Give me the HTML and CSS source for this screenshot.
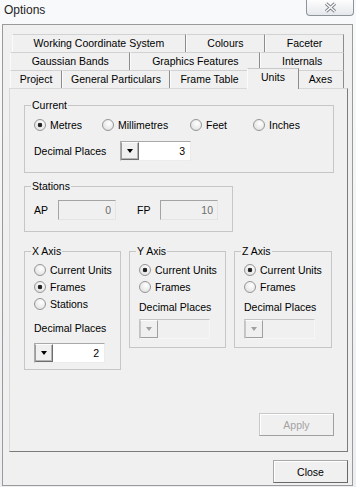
FILE: index.html
```html
<!DOCTYPE html>
<html lang="en">
	<head>
		<meta charset="utf-8" />
		<title>Options</title>
		<link rel="stylesheet" href="styles.css">
	</head>
	<body>
		<div class="dialog">
			<div class="titlebar">
				<span class="title">Options</span>
				<button class="close-x" aria-label="Close">
					<svg width="13" height="11" viewBox="0 0 13 11">
						<path d="M2 1.5 L11 9.5 M11 1.5 L2 9.5" stroke="#80858c" stroke-width="3.4" fill="none"/>
						<path d="M2 1.5 L11 9.5 M11 1.5 L2 9.5" stroke="#fbfbfb" stroke-width="1.4" fill="none"/>
					</svg>
				</button>
			</div>

			<div class="client">
				<div class="tabs">
					<div class="tab-row row1">
						<div class="tab">Working Coordinate System</div>
						<div class="tab">Colours</div>
						<div class="tab">Faceter</div>
					</div>
					<div class="tab-row row2">
						<div class="tab">Gaussian Bands</div>
						<div class="tab">Graphics Features</div>
						<div class="tab">Internals</div>
					</div>
					<div class="tab-row row3">
						<div class="tab t-project">Project</div>
						<div class="tab t-general">General Particulars</div>
						<div class="tab t-frame">Frame Table</div>
						<div class="tab t-units active">Units</div>
						<div class="tab t-axes">Axes</div>
					</div>
				</div>

				<div class="page">
					<fieldset class="grp grp-current">
						<legend>Current</legend>
						<div class="unit-row">
							<label class="opt"><input type="radio" class="radio" name="cur" checked>Metres</label>
							<label class="opt"><input type="radio" class="radio" name="cur">Millimetres</label>
							<label class="opt"><input type="radio" class="radio" name="cur">Feet</label>
							<label class="opt"><input type="radio" class="radio" name="cur">Inches</label>
						</div>
						<div class="dp-row">
							<span class="dp-label">Decimal Places</span>
							<div class="spin">
								<span class="spin-btn"><i class="arrow"></i></span>
								<span class="spin-val">3</span>
							</div>
						</div>
					</fieldset>

					<fieldset class="grp grp-stations">
						<legend>Stations</legend>
						<div class="st-row">
							<span class="st-label">AP</span>
							<input class="field" value="0" disabled>
							<span class="st-label fp">FP</span>
							<input class="field" value="10" disabled>
						</div>
					</fieldset>

					<div class="axes">
						<fieldset class="grp axis axis-x">
							<legend>X Axis</legend>
							<label class="opt row"><input type="radio" class="radio" name="ax">Current Units</label>
							<label class="opt row"><input type="radio" class="radio" name="ax" checked>Frames</label>
							<label class="opt row"><input type="radio" class="radio" name="ax">Stations</label>
							<div class="axis-dp">Decimal Places</div>
							<div class="spin">
								<span class="spin-btn"><i class="arrow"></i></span>
								<span class="spin-val">2</span>
							</div>
						</fieldset>
						<fieldset class="grp axis axis-y">
							<legend>Y Axis</legend>
							<label class="opt row"><input type="radio" class="radio" name="ay" checked>Current Units</label>
							<label class="opt row"><input type="radio" class="radio" name="ay">Frames</label>
							<div class="axis-dp">Decimal Places</div>
							<div class="spin off">
								<span class="spin-btn"><i class="arrow"></i></span>
								<span class="spin-val"></span>
							</div>
						</fieldset>
						<fieldset class="grp axis axis-z">
							<legend>Z Axis</legend>
							<label class="opt row"><input type="radio" class="radio" name="az" checked>Current Units</label>
							<label class="opt row"><input type="radio" class="radio" name="az">Frames</label>
							<div class="axis-dp">Decimal Places</div>
							<div class="spin off">
								<span class="spin-btn"><i class="arrow"></i></span>
								<span class="spin-val"></span>
							</div>
						</fieldset>
					</div>

					<button class="btn btn-apply" disabled>Apply</button>
				</div>

				<div class="dialog-foot">
					<button class="btn">Close</button>
				</div>
			</div>
		</div>
	</body>
</html>
```

FILE: styles.css
```css
* {
	box-sizing: border-box;
}
body {
	margin: 0;
	width: 356px;
	height: 487px;
	overflow: hidden;
	background: linear-gradient(#f8f9fa, #eceef1);
	font-family: "Liberation Sans", Arial, sans-serif;
	font-size: 10.5px;
	color: #000;
}

.dialog {
	height: 487px;
	display: flex;
	flex-direction: column;
}

/* title bar */
.titlebar {
	height: 24px;
	display: flex;
	justify-content: space-between;
	align-items: flex-start;
	padding: 0 2px 0 4px;
}
.title {
	font-size: 12px;
	line-height: 12px;
	margin-top: 4px;
	color: #1e1e1e;
}
.close-x {
	width: 48px;
	height: 16px;
	padding: 0;
	border: 1px solid #8d939b;
	border-top: 0;
	border-radius: 0 0 4px 4px;
	background: linear-gradient(#fdfdfd, #e6e8ec);
	display: flex;
	align-items: center;
	justify-content: center;
}

/* client area */
.client {
	margin-left: 2px;
	width: 351px;
	height: 462px;
	border: 1px solid #9a9a9a;
	background: #f0f0f0;
	padding-top: 9px;
	display: flex;
	flex-direction: column;
}

.tabs {
	margin: 0 4px 0 6px;
}
.tab-row {
	display: flex;
	height: 18px;
}
.row1 {
	margin: 0 4px 0 3px;
}
.row2 {
	margin: 0 4px 0 1px;
}
.row3 {
	margin: 0 3px 0 1px;
}
.tab {
	flex: 1 1 auto;
	padding: 0 9px;
	text-align: center;
	line-height: 17px;
	white-space: nowrap;
	border: 1px solid #d2d2d2;
	border-bottom: 0;
	border-left-color: #fbfbfb;
	border-right-color: #8c8c8c;
	background: #f0f0f0;
}
.row3 .tab {
	flex: none;
	padding: 0;
}
.t-project {
	width: 52px;
}
.t-general {
	width: 108px;
}
.t-frame {
	width: 79px;
}
.t-units {
	width: 52px;
}
.t-axes {
	width: 47px;
}
.tab.active {
	height: 21px;
	margin: -2px -2px -1px;
	position: relative;
	z-index: 1;
	border-top-color: #c8c8c8;
}

.page {
	margin: 0 4px 0 6px;
	height: 364px;
	border: 1px solid;
	border-color: #d9d9d9 #7b7b7b #7b7b7b #d9d9d9;
	padding: 0 13px 15px 14px;
	display: flex;
	flex-direction: column;
	align-items: flex-start;
}

/* group boxes */
.grp {
	margin: 0;
	min-width: 0;
	border: 1px solid #c6c6c6;
	padding: 7px 8px 11px 9px;
}
.grp legend {
	padding: 0 1px;
	margin-left: -3px;
	line-height: 12px;
}
.grp-current {
	align-self: stretch;
	margin-top: 10px;
}
.grp-stations {
	margin-top: 7px;
	width: 209px;
	padding-top: 8px;
}

.opt {
	display: flex;
	align-items: center;
	gap: 4px;
	white-space: nowrap;
}
.radio {
	appearance: none;
	-webkit-appearance: none;
	width: 12px;
	height: 12px;
	margin: 0;
	flex: none;
	border-radius: 50%;
	border: 1px solid #969696;
	background: radial-gradient(circle at 60% 35%, #ffffff, #dadada);
}
.radio:checked {
	background:
		radial-gradient(circle, #1d1d1d 0, #2a2a2a 2px, transparent 2.6px),
		radial-gradient(circle at 60% 35%, #ffffff, #dadada);
}

.unit-row {
	display: grid;
	grid-template-columns: 68px 88px 63px auto;
	height: 14px;
}
.dp-row {
	display: flex;
	align-items: center;
	margin-top: 9px;
}
.dp-label {
	width: 86px;
}

/* spin box */
.spin {
	display: flex;
	width: 71px;
	height: 20px;
	border: 1px solid;
	border-color: #a9a9a9 #ececec #ececec #a9a9a9;
	background: #fff;
}
.spin-btn {
	width: 18px;
	border: 1px solid;
	border-color: #fcfcfc #6e6e6e #6e6e6e #9c9c9c;
	box-shadow: inset -1px -1px #b4b4b4;
	background: #f0f0f0;
	display: flex;
	align-items: center;
	justify-content: center;
}
.arrow {
	width: 0;
	height: 0;
	border-top: 4px solid #000;
	border-left: 3.5px solid transparent;
	border-right: 3.5px solid transparent;
}
.spin-val {
	flex: 1;
	text-align: right;
	padding-right: 5px;
	line-height: 18px;
}
.spin.off {
	background: #f0f0f0;
	border-color: #c4c4c4 #f6f6f6 #f6f6f6 #c4c4c4;
}
.spin.off .spin-btn {
	border-color: #fcfcfc #a0a0a0 #a0a0a0 #c8c8c8;
	box-shadow: none;
}
.spin.off .arrow {
	border-top-color: #a0a0a0;
}

/* stations */
.st-row {
	display: flex;
	align-items: center;
}
.st-label {
	width: 24px;
}
.st-label.fp {
	margin-left: 21px;
	width: 23px;
}
.field {
	width: 58px;
	height: 20px;
	margin: 0;
	padding: 0 4px;
	font: inherit;
	text-align: right;
	color: #6d6d6d;
	background: #f0f0f0;
	border: 1px solid;
	border-color: #a4a4a4 #e4e4e4 #e4e4e4 #a4a4a4;
}

/* axes */
.axes {
	display: flex;
	gap: 8px;
	align-items: flex-start;
	margin-top: 13px;
}
.axis {
	width: 97px;
	padding: 4px 4px 8px 9px;
}
.axis-z {
	width: 98px;
}
.axis-x {
	padding-bottom: 6px;
}
.opt.row {
	height: 17px;
}
.axis-dp {
	margin-top: 6px;
	line-height: 13px;
}
.axis .spin {
	margin-top: 5px;
}
.axis-x .axis-dp {
	margin-top: 10px;
}
.axis-x .spin {
	margin-top: 8px;
}

/* buttons */
.btn {
	width: 75px;
	height: 23px;
	padding: 0;
	font: inherit;
	color: #000;
	background: #f0f0f0;
	border: 1px solid;
	border-color: #a8a8a8 #696969 #696969 #a8a8a8;
	box-shadow: inset 1px 1px #fff;
}
.btn-apply {
	margin-top: auto;
	align-self: flex-end;
	color: #a3a3a3;
	border-color: #c8c8c8 #a0a0a0 #a0a0a0 #c8c8c8;
}

.dialog-foot {
	display: flex;
	justify-content: flex-end;
	padding: 8px 4px 0 0;
}
```
